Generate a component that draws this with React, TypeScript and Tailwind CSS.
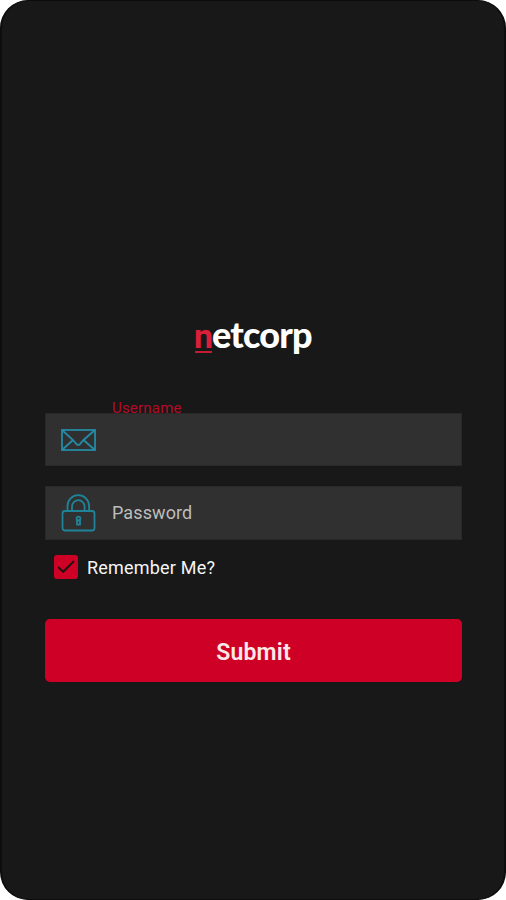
import { useState } from "react";

function MailIcon() {
  return (
    <svg width="36" height="24" viewBox="0 0 36 24" fill="none" stroke="#258ba5" strokeWidth="1.8" className="shrink-0">
      <rect x="1" y="2" width="33" height="20" />
      <path d="M1 2l11 10 3.5 4.2q1.7 1.4 3.5 0L22.5 12 34 2M1 22l11-10M34 22L22.5 12" />
    </svg>
  );
}

function LockIcon() {
  return (
    <svg width="36" height="38" viewBox="0 0 36 38" fill="none" stroke="#1f8499" strokeWidth="1.8" className="shrink-0">
      <rect x="1.5" y="17" width="32" height="19.5" rx="2.5" />
      <path d="M6.5 17v-5a10.8 10.8 0 0 1 21.6 0v5" />
      <path d="M11 17v-4.5a6.3 6.3 0 0 1 12.6 0V17" />
      <circle cx="17.5" cy="24.5" r="1.9" />
      <rect x="16" y="26.5" width="3" height="4" />
    </svg>
  );
}

export default function App() {
  const [username, setUsername] = useState("");
  const [password, setPassword] = useState("");
  const [remember, setRemember] = useState(true);

  return (
    <div className="h-[900px] w-[506px] overflow-hidden bg-white font-[Roboto,sans-serif]">
      <form
        onSubmit={(e) => e.preventDefault()}
        className="flex h-full flex-col rounded-[28px] border-x-2 border-y border-[#0d0d0d] bg-[#181818] pt-[315px] pr-[42px] pl-[43px]"
      >
        <h1 className="relative flex h-[44px] items-baseline pl-[149px] font-[Lato,sans-serif] text-[36px] leading-[36px] font-black tracking-[-0.8px] text-white">
          <span className="w-[18px] font-[Roboto,sans-serif] text-[34px] font-bold text-[#d91f3a]">n</span>
          <span>etcorp</span>
          <span className="absolute top-[35px] left-[150px] h-[2px] w-[17px] bg-[#c51c34]" />
        </h1>

        <label className="relative mt-[53px] flex h-[53px] items-center border border-[#292929] bg-[#303030] pl-[15px]">
          <MailIcon />
          <span className="absolute -top-[14px] left-[66px] text-[15px] leading-4 tracking-[0.2px] text-[#b50b28]">Username</span>
          <input
            value={username}
            onChange={(e) => setUsername(e.target.value)}
            className="ml-[15px] h-full flex-1 bg-transparent text-lg text-white outline-none"
          />
        </label>

        <label className="mt-5 flex h-[54px] items-center border border-[#292929] bg-[#303030] pl-[15px]">
          <LockIcon />
          <input
            type="password"
            placeholder="Password"
            value={password}
            onChange={(e) => setPassword(e.target.value)}
            className="ml-[15px] h-full flex-1 bg-transparent pb-[2px] text-lg tracking-[0.1px] text-white outline-none placeholder:text-[#bdbdbd]"
          />
        </label>

        <label className="mt-[15px] ml-[9px] flex h-6 items-center gap-[9px] text-lg tracking-[0.2px] text-[#f5f5f5]">
          <input
            type="checkbox"
            checked={remember}
            onChange={(e) => setRemember(e.target.checked)}
            className="sr-only"
          />
          <span className="grid h-6 w-6 place-items-center rounded-[3px] bg-[#cf0025]">
            {remember && (
              <svg width="24" height="24" viewBox="0 0 24 24" fill="none" stroke="#241014" strokeWidth="2">
                <path d="M4 12l5.2 4.8L20 6" />
              </svg>
            )}
          </span>
          <span className="pt-[2px]">Remember Me?</span>
        </label>

        <button
          type="submit"
          className="mt-10 h-[63px] shrink-0 rounded-[5px] bg-[#cf0025] pt-[5px] text-[23px] font-semibold tracking-[0.2px] text-[#fbe9e7]"
        >
          Submit
        </button>
      </form>
    </div>
  );
}
